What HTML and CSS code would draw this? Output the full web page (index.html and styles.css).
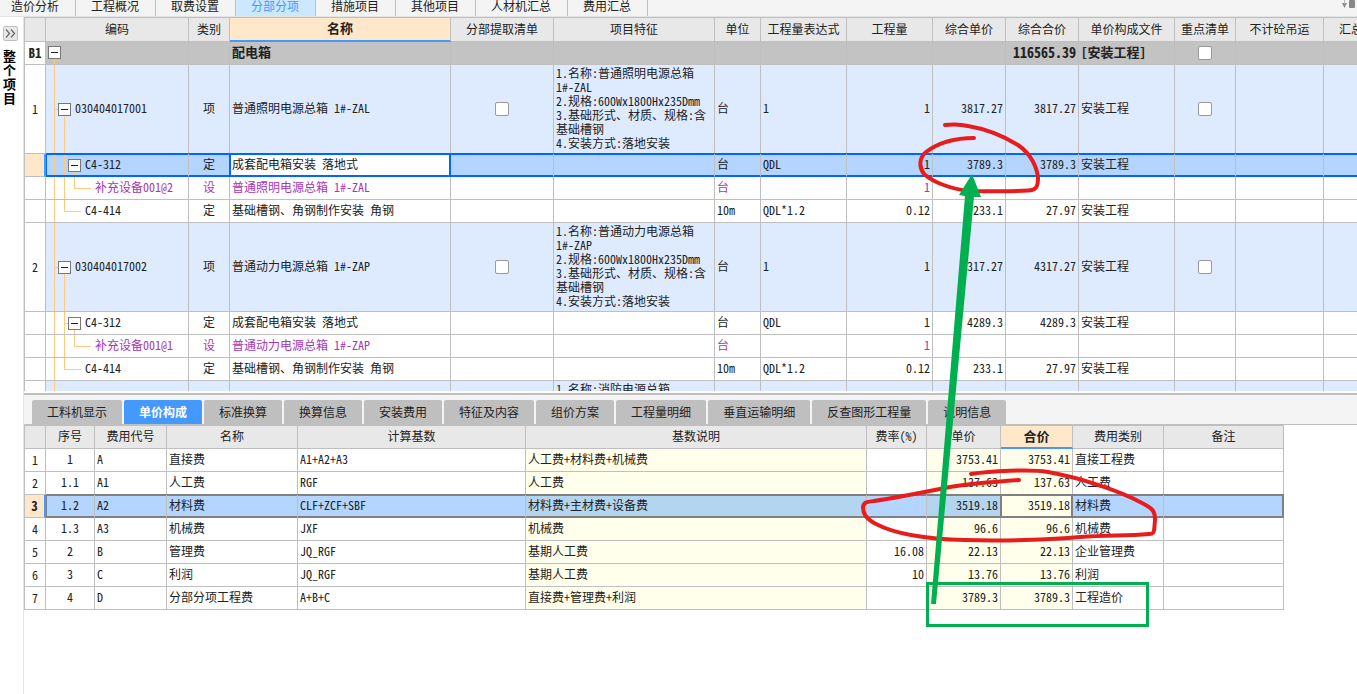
FILE: index.html
```html
<!DOCTYPE html>
<html lang="zh-CN">
<head>
<meta charset="utf-8">
<title>分部分项</title>
<link rel="stylesheet" href="styles.css">
</head>
<body>
<nav class="top-tabs">
  <button>造价分析</button><button>工程概况</button><button>取费设置</button><button class="active">分部分项</button><button>措施项目</button><button>其他项目</button><button>人材机汇总</button><button>费用汇总</button>
  <svg class="tab-tools" width="16" height="9" viewBox="0 0 16 9" aria-hidden="true"><path d="M2 3H7L4.500 8Z" fill="#888"/><path d="M4 0H5V4H4Z" fill="#bbb"/><rect x="9" width="6" height="8" rx="1" fill="#888"/></svg>
</nav>
<div class="workspace">
  <aside class="sidebar">
    <button class="expand" aria-label="展开"><svg width="11" height="9" viewBox="0 0 11 9"><path d="M1 0.500L4.500 4.500L1 8.500M6 0.500L9.500 4.500L6 8.500" fill="none" stroke="#666" stroke-width="1.200"/></svg></button>
    <div class="side-title">整个项目</div>
  </aside>
  <main class="panes">
    <section class="pane upper">
      <table class="grid items">
        <colgroup><col class="w21"><col class="w143"><col class="w41"><col class="w221"><col class="w103"><col class="w161"><col class="w46"><col class="w86"><col class="w86"><col class="w73"><col class="w73"><col class="w96"><col class="w61"><col class="w88"><col class="w79"></colgroup>
        <thead><tr><th></th><th>编码</th><th>类别</th><th class="current">名称</th><th>分部提取清单</th><th>项目特征</th><th>单位</th><th>工程量表达式</th><th>工程量</th><th>综合单价</th><th>综合合价</th><th>单价构成文件</th><th>重点清单</th><th>不计砼吊运</th><th>汇总类别</th></tr></thead>
        <tbody>
          <tr class="group"><td class="no">B1</td><td class="tree root"><button class="toggle" aria-label="折叠"></button></td><td></td><td>配电箱</td><td></td><td></td><td></td><td></td><td></td><td></td><td class="num">116565.39</td><td>[安装工程]</td><td class="mid"><input type="checkbox" aria-label="重点清单"></td><td></td><td></td></tr>
          <tr class="item"><td class="no">1</td><td class="tree lv1"><button class="toggle" aria-label="折叠"></button>030404017001</td><td class="mid">项</td><td>普通照明电源总箱 1#-ZAL</td><td class="mid"><input type="checkbox" aria-label="分部提取清单"></td><td class="feature">1.名称:普通照明电源总箱<br>1#-ZAL<br>2.规格:600Wx1800Hx235Dmm<br>3.基础形式、材质、规格:含<br>基础槽钢<br>4.安装方式:落地安装</td><td>台</td><td>1</td><td class="num">1</td><td class="num">3817.27</td><td class="num">3817.27</td><td>安装工程</td><td class="mid"><input type="checkbox" aria-label="重点清单"></td><td></td><td></td></tr>
          <tr class="selected"><td class="no"></td><td class="tree lv2"><button class="toggle" aria-label="折叠"></button>C4-312</td><td class="mid">定</td><td class="focus">成套配电箱安装 落地式</td><td></td><td></td><td>台</td><td>QDL</td><td class="num">1</td><td class="num">3789.3</td><td class="num">3789.3</td><td>安装工程</td><td></td><td></td><td></td></tr>
          <tr class="device"><td class="no"></td><td class="tree leaf3">补充设备001@2</td><td class="mid">设</td><td>普通照明电源总箱 1#-ZAL</td><td></td><td></td><td>台</td><td></td><td class="num">1</td><td></td><td></td><td></td><td></td><td></td><td></td></tr>
          <tr><td class="no"></td><td class="tree leaf2">C4-414</td><td class="mid">定</td><td>基础槽钢、角钢制作安装 角钢</td><td></td><td></td><td>10m</td><td>QDL*1.2</td><td class="num">0.12</td><td class="num">233.1</td><td class="num">27.97</td><td>安装工程</td><td></td><td></td><td></td></tr>
          <tr class="item"><td class="no">2</td><td class="tree lv1"><button class="toggle" aria-label="折叠"></button>030404017002</td><td class="mid">项</td><td>普通动力电源总箱 1#-ZAP</td><td class="mid"><input type="checkbox" aria-label="分部提取清单"></td><td class="feature">1.名称:普通动力电源总箱<br>1#-ZAP<br>2.规格:600Wx1800Hx235Dmm<br>3.基础形式、材质、规格:含<br>基础槽钢<br>4.安装方式:落地安装</td><td>台</td><td>1</td><td class="num">1</td><td class="num">4317.27</td><td class="num">4317.27</td><td>安装工程</td><td class="mid"><input type="checkbox" aria-label="重点清单"></td><td></td><td></td></tr>
          <tr><td class="no"></td><td class="tree lv2"><button class="toggle" aria-label="折叠"></button>C4-312</td><td class="mid">定</td><td>成套配电箱安装 落地式</td><td></td><td></td><td>台</td><td>QDL</td><td class="num">1</td><td class="num">4289.3</td><td class="num">4289.3</td><td>安装工程</td><td></td><td></td><td></td></tr>
          <tr class="device"><td class="no"></td><td class="tree leaf3">补充设备001@1</td><td class="mid">设</td><td>普通动力电源总箱 1#-ZAP</td><td></td><td></td><td>台</td><td></td><td class="num">1</td><td></td><td></td><td></td><td></td><td></td><td></td></tr>
          <tr><td class="no"></td><td class="tree leaf2">C4-414</td><td class="mid">定</td><td>基础槽钢、角钢制作安装 角钢</td><td></td><td></td><td>10m</td><td>QDL*1.2</td><td class="num">0.12</td><td class="num">233.1</td><td class="num">27.97</td><td>安装工程</td><td></td><td></td><td></td></tr>
          <tr class="item"><td class="no"></td><td class="tree trunk"></td><td></td><td></td><td></td><td class="feature top">1.名称:消防电源总箱</td><td></td><td></td><td></td><td></td><td></td><td></td><td></td><td></td><td></td></tr>
        </tbody>
      </table>
    </section>
    <section class="pane lower">
      <nav class="sub-tabs"><button>工料机显示</button><button class="active">单价构成</button><button>标准换算</button><button>换算信息</button><button>安装费用</button><button>特征及内容</button><button>组价方案</button><button>工程量明细</button><button>垂直运输明细</button><button>反查图形工程量</button><button>说明信息</button></nav>
      <table class="grid costs">
        <colgroup><col class="w21"><col class="w49"><col class="w72"><col class="w131"><col class="w228"><col class="w341"><col class="w60"><col class="w74"><col class="w72"><col class="w91"><col class="w120"></colgroup>
        <thead><tr><th></th><th>序号</th><th>费用代号</th><th>名称</th><th>计算基数</th><th>基数说明</th><th>费率(%)</th><th>单价</th><th class="current">合价</th><th>费用类别</th><th>备注</th></tr></thead>
        <tbody>
          <tr><td class="no">1</td><td class="mid">1</td><td>A</td><td>直接费</td><td>A1+A2+A3</td><td class="calc">人工费+材料费+机械费</td><td></td><td class="num calc">3753.41</td><td class="num calc">3753.41</td><td>直接工程费</td><td></td></tr>
          <tr><td class="no">2</td><td class="mid">1.1</td><td>A1</td><td>人工费</td><td>RGF</td><td class="calc">人工费</td><td></td><td class="num calc">137.63</td><td class="num calc">137.63</td><td>人工费</td><td></td></tr>
          <tr class="selected"><td class="no">3</td><td class="mid first">1.2</td><td>A2</td><td>材料费</td><td>CLF+ZCF+SBF</td><td class="calc">材料费+主材费+设备费</td><td></td><td class="num calc">3519.18</td><td class="num focus">3519.18</td><td>材料费</td><td class="last"></td></tr>
          <tr><td class="no">4</td><td class="mid">1.3</td><td>A3</td><td>机械费</td><td>JXF</td><td class="calc">机械费</td><td></td><td class="num calc">96.6</td><td class="num calc">96.6</td><td>机械费</td><td></td></tr>
          <tr><td class="no">5</td><td class="mid">2</td><td>B</td><td>管理费</td><td>JQ_RGF</td><td class="calc">基期人工费</td><td class="num">16.08</td><td class="num calc">22.13</td><td class="num calc">22.13</td><td>企业管理费</td><td></td></tr>
          <tr><td class="no">6</td><td class="mid">3</td><td>C</td><td>利润</td><td>JQ_RGF</td><td class="calc">基期人工费</td><td class="num">10</td><td class="num calc">13.76</td><td class="num calc">13.76</td><td>利润</td><td></td></tr>
          <tr><td class="no">7</td><td class="mid">4</td><td>D</td><td>分部分项工程费</td><td>A+B+C</td><td class="calc">直接费+管理费+利润</td><td></td><td class="num calc">3789.3</td><td class="num calc">3789.3</td><td>工程造价</td><td></td></tr>
        </tbody>
      </table>
    </section>
  </main>
</div>
<svg class="markup" width="1357" height="694" viewBox="0 0 1357 694" aria-hidden="true">
  <g fill="none" stroke="#e81c1c" stroke-width="4" stroke-linecap="round" stroke-linejoin="round">
    <path d="M945 125C953 124 960 124 968 126C986 129 1005 137 1018 145C1031 154 1037 167 1038 178C1038 187 1036 190 1028 190.500C1010 192 990 191 970 191C950 189 933 182 924 174C918 166 920 157 926 152C938 143 955 138 974 138"/>
    <path d="M971 474C990 471 1030 469 1048 472C1082 478 1122 492 1142 503C1154 509 1155 512 1155 520C1154 531 1155 534 1149 534C1125 536 1110 535 1080 537C1050 540 1000 541 965 540C925 539 895 534 876 524C865 518 863 513 863 507C864 502 866 502 874 501C895 498 920 493 950 487C973 483 995 482 1019 480"/>
  </g>
  <path d="M931 604L965 196L959 195L972 174L981 197L974 197L936 604Z" fill="#00b050"/>
  <rect x="927.500" y="583.500" width="220" height="42" fill="none" stroke="#00b050" stroke-width="3"/>
</svg>
</body>
</html>
```
FILE: styles.css
```css
* { box-sizing: border-box; }
body {
  margin: 0;
  height: 100vh;
  overflow: hidden;
  display: flex;
  flex-direction: column;
  position: relative;
  background: #fff;
  color: #222;
  font: 12px/14px "Noto Sans Mono CJK SC", "Noto Sans CJK SC", monospace;
}
button { font: inherit; color: inherit; border: 0; padding: 0; margin: 0; background: none; }

.top-tabs {
  flex: none;
  height: 17px;
  display: flex;
  align-items: flex-end;
  overflow: hidden;
  background: #f4f4f4;
  border-bottom: 1px solid #e4e4e4;
}
.top-tabs button {
  height: 28px;
  padding: 8px 16px 0 15px;
  border-right: 1px solid #bfbfbf;
  white-space: nowrap;
}
.top-tabs button:first-child { padding-left: 11px; }
.top-tabs .active { background: #cce8ff; color: #4499ff; }
.tab-tools { margin-left: auto; margin-right: 1px; align-self: flex-start; }

.workspace { flex: 1; min-height: 0; display: flex; }
.sidebar {
  flex: none;
  width: 24px;
  border-right: 1px solid #e4e4e4;
  display: flex;
  flex-direction: column;
  align-items: flex-start;
  gap: 8px;
  padding: 9px 0 0 3px;
}
.expand {
  width: 15px;
  height: 15px;
  display: grid;
  place-items: center;
  background: #e8e8e8;
  border: 1px solid #bfbfbf;
  border-radius: 2px;
}
.side-title { width: 13px; font-size: 13px; font-weight: 700; color: #000; }

.panes { flex: 1; min-width: 0; display: flex; flex-direction: column; }
.pane { min-height: 0; overflow: hidden; }
.upper { flex: 374; }
.lower { flex: 303; }

.grid {
  table-layout: fixed;
  border-collapse: separate;
  border-spacing: 0;
  border: solid #bfbfbf;
  border-width: 1px 0 0 1px;
}
.items { width: 1379px; }
.costs { width: 1260px; }
.w21 { width: 21px; } .w41 { width: 41px; } .w46 { width: 46px; } .w49 { width: 49px; }
.w60 { width: 60px; } .w61 { width: 61px; } .w72 { width: 72px; } .w73 { width: 73px; }
.w74 { width: 74px; } .w79 { width: 79px; } .w86 { width: 86px; } .w88 { width: 88px; }
.w91 { width: 91px; } .w96 { width: 96px; } .w103 { width: 103px; } .w120 { width: 120px; }
.w131 { width: 131px; } .w143 { width: 143px; } .w161 { width: 161px; } .w221 { width: 221px; }
.w228 { width: 228px; } .w341 { width: 341px; }

.grid th, .grid td {
  height: 23px;
  padding: 0 2px 2px;
  border: solid #bfbfbf;
  border-width: 0 1px 1px 0;
  white-space: nowrap;
  text-align: left;
  vertical-align: middle;
}
.grid th { background: #e8e8e8; font-weight: 400; text-align: center; }
.items th { height: 24px; }
.grid th.current {
  background: #ffe7ca;
  border-bottom: 2px solid #4499ff;
  font-size: 13px;
  font-weight: 700;
}
.grid .mid { text-align: center; padding: 0 0 2px; }
.grid .no { text-align: center; padding: 0; font-size: 12px; }
.grid .mid:has(input) { padding: 0; }
.grid .num { text-align: right; }
.grid .calc { background: #ffffeb; }
.grid .feature { line-height: 14px; }
.grid .top { vertical-align: top; padding-top: 1px; }

.group td { background: #c3c3c3; font-size: 13px; font-weight: 700; }
.group .num { font-size: 14px; }
.grid .group .no { background: #fff; font-size: 13px; }
.item td { height: 89px; background-color: #deebff; }
.item .no { background: #fff; }
.device td { color: #a637b5; }

input[type="checkbox"] {
  appearance: none;
  width: 14px;
  height: 14px;
  margin: 0;
  display: block;
  margin-inline: auto;
  background: #fff;
  border: 1px solid #999;
  border-radius: 2px;
}

/* Tree column: trunk lines sit 8, 18 and 28px from the cell edge */
.tree { --ink: linear-gradient(#ffc980, #ffc980); background-repeat: no-repeat; }
.toggle {
  width: 13px;
  height: 13px;
  margin-right: 4px;
  vertical-align: -2px;
  border: 1px solid #777;
  background: linear-gradient(#222, #222) center / 7px 1px no-repeat #fff;
}
.grid .root { line-height: 13px; background-image: var(--ink); background-size: 1px 50%; background-position: 8px 100%; background-repeat: no-repeat; }
.root .toggle { display: block; }
.trunk { background-image: var(--ink); background-size: 1px 100%; background-position: 8px 0; }
.grid .lv1 {
  padding-left: 12px;
  background-image: var(--ink), var(--ink), var(--ink);
  background-size: 1px 100%, 4px 1px, 1px 50%;
  background-position: 8px 0, 8px 50%, 18px 100%;
}
.grid .lv2 {
  padding-left: 22px;
  background-image: var(--ink), var(--ink), var(--ink), var(--ink);
  background-size: 1px 100%, 1px 100%, 4px 1px, 1px 50%;
  background-position: 8px 0, 18px 0, 18px 50%, 28px 100%;
}
.grid .leaf2 {
  padding-left: 39px;
  background-image: var(--ink), var(--ink), var(--ink);
  background-size: 1px 100%, 1px 50%, 17px 1px;
  background-position: 8px 0, 18px 0, 18px 50%;
}
.grid .leaf3 {
  padding-left: 49px;
  background-image: var(--ink), var(--ink), var(--ink), var(--ink);
  background-size: 1px 100%, 1px 100%, 1px 50%, 17px 1px;
  background-position: 8px 0, 18px 0, 28px 0, 28px 50%;
}

/* Selected rows carry a two-pixel frame */
.items .selected { --frame: #0066ff; }
.costs .selected { --frame: #808080; }
.selected td {
  background-color: #b3d5ff;
  border-bottom-color: var(--frame);
  box-shadow: 0 -1px 0 var(--frame), inset 0 1px 0 var(--frame), inset 0 -1px 0 var(--frame);
}
.selected .tree, .selected .first {
  box-shadow: 0 -1px 0 var(--frame), inset 0 1px 0 var(--frame), inset 0 -1px 0 var(--frame), inset 1px 0 0 var(--frame);
}
.selected .last {
  border-right-color: var(--frame);
  box-shadow: 0 -1px 0 var(--frame), inset 0 1px 0 var(--frame), inset -1px -1px 0 var(--frame);
}
.selected .calc { background: #b3d5f0; }
.selected .focus {
  background: #fff;
  border-right-color: var(--frame);
  box-shadow: -1px -1px 0 var(--frame), -1px 0 0 var(--frame), 0 -1px 0 var(--frame), inset 0 0 0 1px var(--frame);
}
.costs .selected .focus { background: #ffffeb; }
.grid .selected .no {
  background: #ffe7ca;
  border-right: 2px solid #4499ff;
  border-bottom-color: #bfbfbf;
  box-shadow: none;
  font-size: 13px;
  font-weight: 700;
}

.sub-tabs {
  height: 32px;
  margin-top: 2px;
  display: flex;
  align-items: stretch;
  gap: 2px;
  padding: 5px 8px 0;
  background: #f4f4f4;
  border: solid #bfbfbf;
  border-width: 2px 0 1px;
}
.sub-tabs button {
  padding: 0 15px;
  background: #bfbfbf;
  border-radius: 2px 2px 0 0;
  white-space: nowrap;
}
.sub-tabs .active { background: #4499ff; color: #fff; font-weight: 700; }

.markup { position: absolute; left: 0; top: 0; pointer-events: none; }
```
